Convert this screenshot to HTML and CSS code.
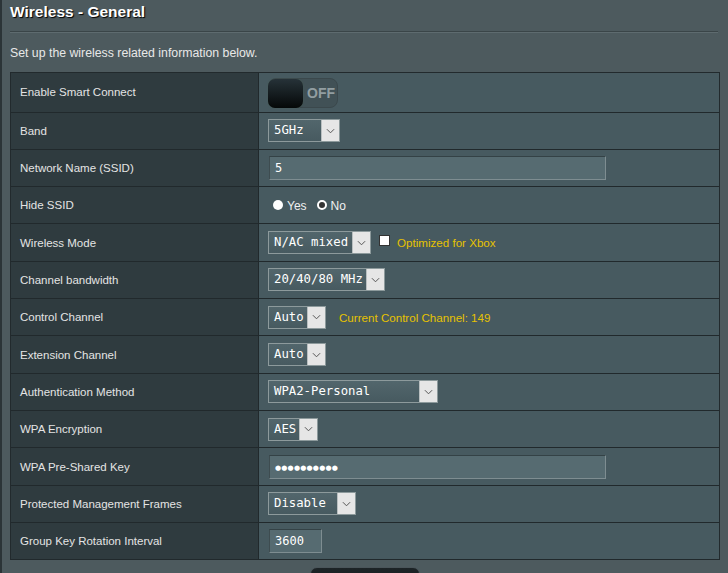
FILE: index.html
```html
<!DOCTYPE html>
<html>
<head>
<meta charset="utf-8">
<link rel="stylesheet" href="styles.css">
</head>
<body>
<div class="page">
  <h1 class="title">Wireless - General</h1>
  <div class="rule"></div>
  <p class="intro">Set up the wireless related information below.</p>

  <div class="tbl">
    <div class="row first">
      <div class="lbl">Enable Smart Connect</div>
      <div class="val">
        <div class="toggle"><span class="knob"></span><span class="off">OFF</span></div>
      </div>
    </div>
    <div class="row">
      <div class="lbl">Band</div>
      <div class="val"><div class="sel w-band"><span class="txt">5GHz</span><span class="arr"><svg viewBox="0 0 10 6" width="9" height="6"><path d="M1 1l4 4 4-4" fill="none" stroke="#555" stroke-width="1.1"/></svg></span></div></div>
    </div>
    <div class="row">
      <div class="lbl">Network Name (SSID)</div>
      <div class="val"><div class="inp w-long">5</div></div>
    </div>
    <div class="row">
      <div class="lbl">Hide SSID</div>
      <div class="val">
        <span class="radio"></span><span class="rtxt">Yes</span>
        <span class="radio on"></span><span class="rtxt">No</span>
      </div>
    </div>
    <div class="row">
      <div class="lbl">Wireless Mode</div>
      <div class="val">
        <div class="sel w-mode"><span class="txt">N/AC mixed</span><span class="arr"><svg viewBox="0 0 10 6" width="9" height="6"><path d="M1 1l4 4 4-4" fill="none" stroke="#555" stroke-width="1.1"/></svg></span></div>
        <span class="chk"></span><span class="note">Optimized for Xbox</span>
      </div>
    </div>
    <div class="row">
      <div class="lbl">Channel bandwidth</div>
      <div class="val"><div class="sel w-bw"><span class="txt">20/40/80 MHz</span><span class="arr"><svg viewBox="0 0 10 6" width="9" height="6"><path d="M1 1l4 4 4-4" fill="none" stroke="#555" stroke-width="1.1"/></svg></span></div></div>
    </div>
    <div class="row">
      <div class="lbl">Control Channel</div>
      <div class="val">
        <div class="sel w-auto"><span class="txt">Auto</span><span class="arr"><svg viewBox="0 0 10 6" width="9" height="6"><path d="M1 1l4 4 4-4" fill="none" stroke="#555" stroke-width="1.1"/></svg></span></div>
        <span class="note ch">Current Control Channel: 149</span>
      </div>
    </div>
    <div class="row">
      <div class="lbl">Extension Channel</div>
      <div class="val"><div class="sel w-auto"><span class="txt">Auto</span><span class="arr"><svg viewBox="0 0 10 6" width="9" height="6"><path d="M1 1l4 4 4-4" fill="none" stroke="#555" stroke-width="1.1"/></svg></span></div></div>
    </div>
    <div class="row">
      <div class="lbl">Authentication Method</div>
      <div class="val"><div class="sel w-auth"><span class="txt">WPA2-Personal</span><span class="arr"><svg viewBox="0 0 10 6" width="9" height="6"><path d="M1 1l4 4 4-4" fill="none" stroke="#555" stroke-width="1.1"/></svg></span></div></div>
    </div>
    <div class="row">
      <div class="lbl">WPA Encryption</div>
      <div class="val"><div class="sel w-aes"><span class="txt">AES</span><span class="arr"><svg viewBox="0 0 10 6" width="9" height="6"><path d="M1 1l4 4 4-4" fill="none" stroke="#555" stroke-width="1.1"/></svg></span></div></div>
    </div>
    <div class="row">
      <div class="lbl">WPA Pre-Shared Key</div>
      <div class="val"><div class="inp w-long"><span class="dots">●●●●●●●●●●</span></div></div>
    </div>
    <div class="row">
      <div class="lbl">Protected Management Frames</div>
      <div class="val"><div class="sel w-dis"><span class="txt">Disable</span><span class="arr"><svg viewBox="0 0 10 6" width="9" height="6"><path d="M1 1l4 4 4-4" fill="none" stroke="#555" stroke-width="1.1"/></svg></span></div></div>
    </div>
    <div class="row">
      <div class="lbl">Group Key Rotation Interval</div>
      <div class="val"><div class="inp w-short">3600</div></div>
    </div>
  </div>

  <div class="actions"><div class="btn"></div></div>
</div>
</body>
</html>
```

FILE: styles.css
```css
html, body {
  margin: 0;
  padding: 0;
  background: #4d5a5e;
  height: 100%;
  overflow: hidden;
}
.page {
  border-left: 2px solid #2b3437;
  min-height: 573px;
  box-sizing: border-box;
  font-family: "Liberation Sans", Arial, sans-serif;
  color: #e6e6e6;
}
.title {
  margin: 0;
  padding: 3px 0 0 8px;
  height: 28px;
  box-sizing: border-box;
  font-size: 15.5px;
  font-weight: bold;
  color: #ffffff;
  text-shadow: 1px 1px 1px #000;
  line-height: 18px;
}
.rule {
  margin: 3px 10px 0 8px;
  height: 1px;
  background: #3a4548;
  border-bottom: 1px solid #5e6b6f;
}
.intro {
  margin: 0;
  padding: 13px 0 0 8px;
  height: 39px;
  box-sizing: border-box;
  font-size: 12.3px;
  line-height: 14px;
  color: #e8e8e8;
}
.tbl {
  margin-left: 8px;
  width: 710px;
  border: 1px solid #222a2d;
  border-bottom: 0;
  box-sizing: border-box;
}
.row {
  display: grid;
  grid-template-columns: 248px 1fr;
  height: 37.33px;
  border-bottom: 1px solid #21292c;
  box-sizing: border-box;
}
.row.first { height: 39.5px; }
.lbl {
  background: #2f3b3f;
  border-right: 1px solid #21292c;
  padding-left: 9px;
  display: flex;
  align-items: center;
  font-size: 11.5px;
  color: #e4e4e4;
}
.val {
  background: #475a60;
  display: flex;
  align-items: center;
  padding-left: 9px;
  font-size: 11.6px;
}
.toggle {
  width: 70px;
  height: 30px;
  border-radius: 8px;
  background: #415156;
  border: 1px solid #3b484c;
  box-sizing: border-box;
  display: flex;
  align-items: center;
  margin-top: 2px;
}
.knob {
  width: 35px;
  height: 29px;
  margin-left: -1px;
  border-radius: 7px;
  background: linear-gradient(#263238, #050808);
  box-shadow: 0 0 1px #4c6a50;
}
.off {
  margin-left: 4px;
  font-size: 14px;
  font-weight: bold;
  color: #929ea1;
}
.sel {
  height: 23px;
  display: flex;
  border: 1px solid #8d9a9c;
  box-sizing: border-box;
  background: linear-gradient(#52666c, #475a60);
}
.sel .txt {
  flex: 1;
  padding-left: 5px;
  font-family: "DejaVu Sans Mono", "Liberation Mono", monospace;
  font-size: 12.3px;
  line-height: 21px;
  color: #ffffff;
  white-space: nowrap;
}
.sel .arr {
  width: 17px;
  background: #e6e6e6;
  border-left: 1px solid #b9bfc0;
  display: flex;
  align-items: center;
  justify-content: center;
}
.w-band { width: 72px; }
.w-mode { width: 103px; }
.w-bw { width: 117px; }
.w-auto { width: 58px; }
.w-auth { width: 170px; }
.w-aes { width: 50px; }
.w-dis { width: 88px; }
.inp {
  height: 24px;
  margin-left: 1px;
  box-sizing: border-box;
  background: #566b71;
  border: 1px solid #7e8d91;
  border-top-color: #344246;
  border-left-color: #3e4c50;
  padding-left: 5px;
  font-family: "DejaVu Sans Mono", "Liberation Mono", monospace;
  font-size: 12px;
  line-height: 22px;
  color: #ffffff;
}
.w-long { width: 337px; }
.w-short { width: 53px; }
.dots {
  font-family: "DejaVu Sans", sans-serif;
  font-size: 7px;
  letter-spacing: 0.2px;
  vertical-align: 1px;
}
.radio {
  width: 10px;
  height: 10px;
  border-radius: 50%;
  background: #ffffff;
  margin-left: 5px;
  box-sizing: border-box;
}
.radio.on {
  margin-left: 10px;
  border: 2.5px solid #ffffff;
  background: #333;
}
.rtxt {
  margin-left: 4px;
  color: #f0f0f0;
  font-size: 12px;
  padding-top: 2px;
}
.chk {
  width: 11px;
  height: 11px;
  margin-left: 8px;
  background: #ffffff;
  border: 1px solid #333;
  box-sizing: border-box;
  margin-top: -5px;
}
.note {
  margin-left: 7px;
  color: #e6c200;
}
.note.ch { margin-left: 13px; }
.actions {
  display: flex;
  justify-content: center;
  padding-top: 7px;
  margin-left: 8px;
  width: 710px;
}
.btn {
  width: 110px;
  height: 34px;
  border-radius: 7px;
  background: linear-gradient(#1d2427, #11171a);
  border: 1px solid #4a555a;
  box-sizing: border-box;
}
```
